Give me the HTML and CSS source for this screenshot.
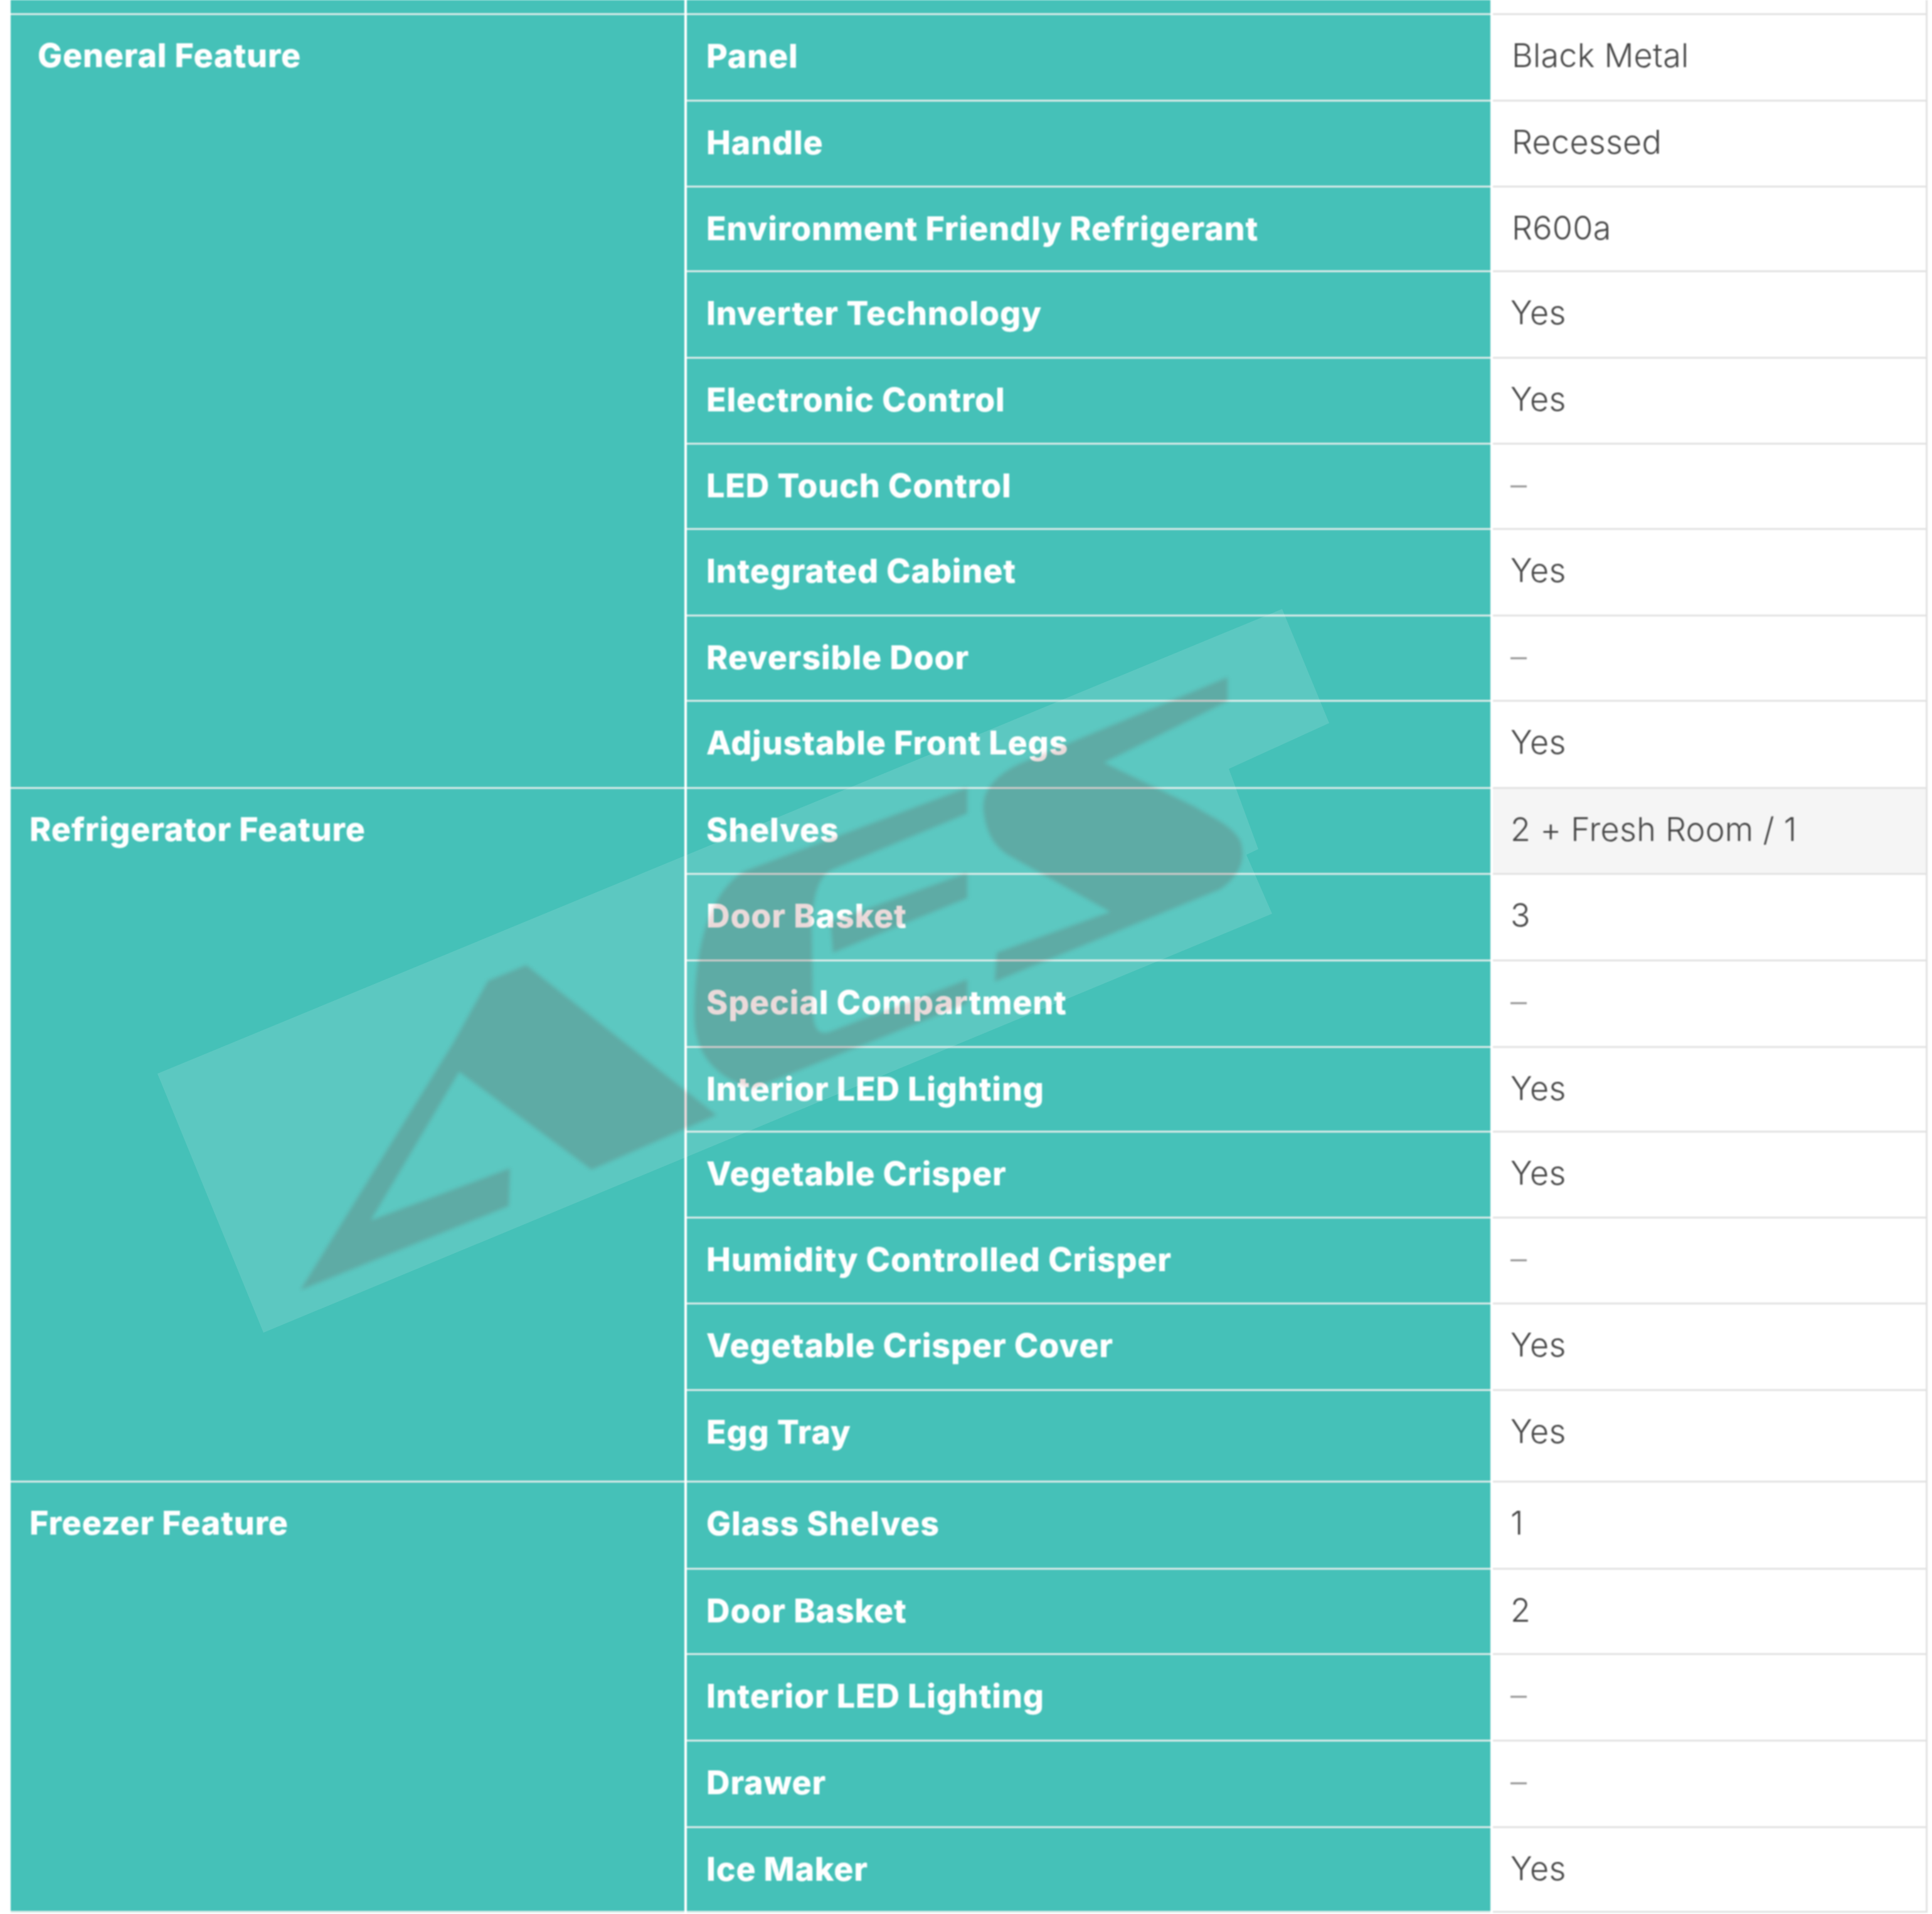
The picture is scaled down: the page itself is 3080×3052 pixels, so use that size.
FILE: index.html
```html
<!DOCTYPE html>
<html lang="en">
<head>
<meta charset="utf-8">
<title>Specifications</title>
<link rel="stylesheet" href="styles.css">
</head>
<body>
<main class="spec">
  <div class="grid">
    <div class="sec lead"></div><div class="lab lead"></div><div class="val lead"></div>

    <div class="sec s9 first">General Feature</div>
    <div class="lab">Panel</div><div class="val ind">Black Metal</div>
    <div class="lab">Handle</div><div class="val ind">Recessed</div>
    <div class="lab">Environment Friendly Refrigerant</div><div class="val ind">R600a</div>
    <div class="lab">Inverter Technology</div><div class="val">Yes</div>
    <div class="lab">Electronic Control</div><div class="val">Yes</div>
    <div class="lab">LED Touch Control</div><div class="val dash">–</div>
    <div class="lab">Integrated Cabinet</div><div class="val">Yes</div>
    <div class="lab">Reversible Door</div><div class="val dash">–</div>
    <div class="lab">Adjustable Front Legs</div><div class="val">Yes</div>

    <div class="sec s8">Refrigerator Feature</div>
    <div class="lab">Shelves</div><div class="val hover">2 + Fresh Room / 1</div>
    <div class="lab">Door Basket</div><div class="val">3</div>
    <div class="lab">Special Compartment</div><div class="val dash">–</div>
    <div class="lab">Interior LED Lighting</div><div class="val">Yes</div>
    <div class="lab">Vegetable Crisper</div><div class="val">Yes</div>
    <div class="lab">Humidity Controlled Crisper</div><div class="val dash">–</div>
    <div class="lab">Vegetable Crisper Cover</div><div class="val">Yes</div>
    <div class="lab">Egg Tray</div><div class="val">Yes</div>

    <div class="sec s5">Freezer Feature</div>
    <div class="lab">Glass Shelves</div><div class="val">1</div>
    <div class="lab">Door Basket</div><div class="val">2</div>
    <div class="lab">Interior LED Lighting</div><div class="val dash">–</div>
    <div class="lab">Drawer</div><div class="val dash">–</div>
    <div class="lab">Ice Maker</div><div class="val">Yes</div>
  </div>
  <svg class="mark" viewBox="0 0 3080 3052" aria-hidden="true">
    <polygon class="band" points="251,1712 2044,971 2119,1153 1959,1226 2006,1354 1987,1363 2028,1457 420,2125"/>
    <path class="ink" d="M839,1539 L778,1564 L722,1664 L479,2057 L811,1923 L813,1863 L591,1946 L732,1709 L943,1865 L1142,1778 Z"/>
    <path class="ink" d="M1542,1256 L1187,1389 C1135,1420 1107,1500 1107,1620 C1107,1670 1130,1715 1200,1736 L1542,1600 L1542,1562 L1321,1646 C1305,1650 1296,1640 1296,1610 L1294,1480 C1296,1425 1305,1395 1330,1385 L1542,1297 Z"/>
    <path class="ink" d="M1542,1392 L1542,1432 L1328,1519 L1324,1470 Z"/>
    <path class="ink" d="M1957,1080 L1625,1218 C1580,1240 1562,1268 1569,1300 C1574,1330 1585,1350 1610,1365 L1770,1454 L1589,1519 L1586,1565 L1945,1418 C1975,1398 1988,1370 1977,1340 C1962,1315 1935,1305 1904,1286 L1760,1216 L1957,1118 Z"/>
  </svg>
</main>
</body>
</html>
```
FILE: styles.css
```css
html, body { margin: 0; background: #fff; }
.spec { position: relative; width: 3080px; height: 3052px; overflow: hidden; }
.grid {
  display: grid;
  box-sizing: border-box;
  width: 3073px;
  padding-left: 17px;
  grid-template-columns: 1074px 1281px 693px;
  column-gap: 4px;
  grid-template-rows: 24px 138px 137px 135px 138px 137px 136px 138px 136px 139px 137px 138px 138px 135px 137px 137px 138px 146px 139px 136px 138px 138px 135px;
  font-family: Inter, "Liberation Sans", sans-serif;
  filter: blur(1px);
}
.sec, .lab {
  background: #45c1b8;
  color: #fff;
  font-weight: 800;
  font-size: 52px;
  letter-spacing: 0.8px;
  line-height: 66px;
  border-bottom: 3px solid #dcebe9;
  box-sizing: border-box;
}
.sec { padding: 32px 0 0 30px; }
.first { padding-left: 43px; }
.s9 { grid-row: span 9; }
.s8 { grid-row: span 8; }
.s5 { grid-row: span 5; }
.lab { padding: 33px 0 0 31px; white-space: nowrap; }
.val {
  box-sizing: border-box;
  padding: 32px 0 0 28px;
  color: #474747;
  font-weight: 300;
  font-size: 52px;
  letter-spacing: 0.3px;
  line-height: 66px;
  border-bottom: 3px solid #e2e2e2;
  border-right: 3px solid #e2e2e2;
}
.ind { padding-left: 30px; }
.dash { color: #9a9a9a; }
.hover { background: #f5f5f5; }
.lead { padding: 0; }
.mark { position: absolute; left: 0; top: 0; width: 3080px; height: 3052px; pointer-events: none; }
.band { fill: rgba(255, 255, 255, 0.125); }
.ink { fill: rgba(110, 0, 0, 0.145); filter: blur(3px); }
```
